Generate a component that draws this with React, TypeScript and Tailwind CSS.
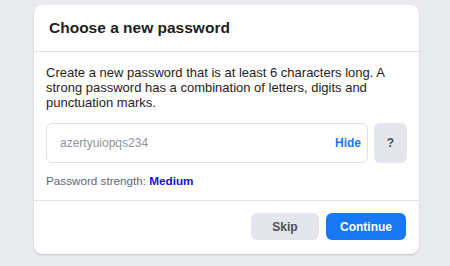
export default function App() {
  return (
    <div className="min-h-[266px] w-[450px] bg-[#e9ebee] pt-[5px] font-['Liberation_Sans',Arial,sans-serif]">
      <div className="ml-[34px] w-[385px] rounded-lg bg-white shadow-[0_1px_2px_rgba(0,0,0,0.2)]">
        <div className="flex h-[47px] items-center border-b border-[#dddfe2] px-[15px]">
          <h2 className="text-[15.5px] font-bold text-[#1c1e21]">Choose a new password</h2>
        </div>

        <div className="border-b border-[#dddfe2] px-3 pt-[13px] pb-3">
          <p className="text-[13px] leading-[15px] text-[#1c1e21]">
            Create a new password that is at least 6 characters long. A strong password has a
            combination of letters, digits and punctuation marks.
          </p>

          <div className="mt-[13px] flex gap-[6px]">
            <div className="flex h-10 flex-1 items-center rounded-md border border-[#dddfe2] pl-[13px] pr-[6px]">
              <span className="flex-1 text-[12px] text-[#90949c]">azertyuiopqs234</span>
              <button className="text-[12px] font-bold text-[#1877f2]">Hide</button>
            </div>
            <button className="flex h-10 w-[33px] items-center justify-center rounded-md bg-[#e4e6eb] text-[12px] font-bold text-[#4b4f56]">
              ?
            </button>
          </div>

          <p className="mt-[10px] text-[11.7px] leading-[15px] text-[#606770]">
            Password strength: <span className="font-bold text-[#1010e8]">Medium</span>
          </p>
        </div>

        <div className="flex justify-end gap-[7px] px-[13px] pt-3 pb-[14px]">
          <button className="h-[27px] w-[68px] rounded-md bg-[#e4e6eb] text-[12px] font-bold text-[#4b4f56]">
            Skip
          </button>
          <button className="h-[27px] w-[80px] rounded-md bg-[#1877f2] text-[12px] font-bold text-white">
            Continue
          </button>
        </div>
      </div>
    </div>
  );
}
